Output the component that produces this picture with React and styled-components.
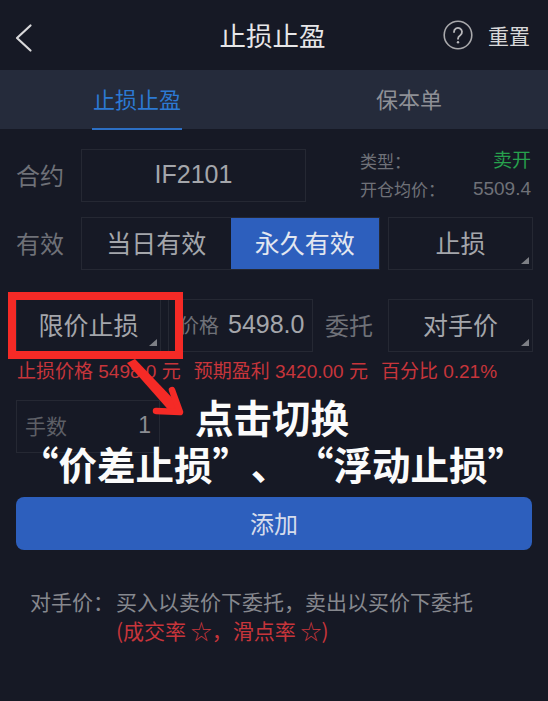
import React from "react";
import styled, { createGlobalStyle } from "styled-components";

const Global = createGlobalStyle`
  html, body { margin: 0; padding: 0; background: #161925; }
  * { box-sizing: border-box; }
  #root { width: 548px; height: 701px; overflow: hidden; }
`;

const Page = styled.div`
  position: relative;
  width: 548px;
  height: 701px;
  background: #161925;
  font-family: "Noto Sans CJK SC", "Liberation Sans", sans-serif;
  color: #9b9da3;
`;

const Header = styled.header`
  height: 70px;
  display: flex;
  align-items: center;
  padding: 4px 18px 0 14px;
`;

const BackIcon = styled.svg`
  flex: none;
  margin-top: 2px;
`;

const Title = styled.div`
  flex: 1;
  text-align: center;
  font-size: 26.5px;
  line-height: 34px;
  margin-top: -5px;
  color: #e6e6e8;
  padding-left: 68px;
`;

const HeaderRight = styled.div`
  display: flex;
  align-items: center;
  gap: 15px;
  margin-top: -5px;
  font-size: 21px;
  color: #d8d8da;
`;

const Tabs = styled.nav`
  height: 59px;
  display: flex;
  background: #252b3b;
`;

const Tab = styled.div`
  position: relative;
  width: ${(p) => p.$w}px;
  height: 100%;
  display: flex;
  align-items: center;
  justify-content: center;
  font-size: 22px;
  padding-bottom: 3px;
  color: ${(p) => (p.$active ? "#2c79d2" : "#8e9096")};
  &::after {
    content: "";
    display: ${(p) => (p.$active ? "block" : "none")};
    position: absolute;
    left: 92px;
    width: 90px;
    bottom: -1px;
    height: 2px;
    background: #2c6fc4;
  }
`;

const Form = styled.main`
  padding: 20px 16px 0;
  display: flex;
  flex-direction: column;
`;

const Row = styled.div`
  display: flex;
  align-items: center;
  height: 53px;
  margin-bottom: ${(p) => p.$mb || 0}px;
`;

const Label = styled.div`
  width: ${(p) => p.$w || 65}px;
  flex: none;
  font-size: 24px;
  color: #6f7178;
  padding-bottom: 3px;
  margin-left: ${(p) => p.$ml || 0}px;
`;

const Box = styled.div`
  position: relative;
  flex: none;
  width: ${(p) => p.$w}px;
  height: 100%;
  margin-left: ${(p) => p.$ml || 0}px;
  padding-bottom: 3px;
  border: 1px solid #252833;
  display: flex;
  align-items: center;
  justify-content: center;
  font-size: 25px;
  color: #a4a6ab;
`;

const Corner = styled.span`
  position: absolute;
  right: 3px;
  bottom: 5px;
  width: 0;
  height: 0;
  border-left: 8px solid transparent;
  border-bottom: 7px solid #7d7f85;
`;

const Contract = styled(Box)`
  font-family: "Liberation Sans", sans-serif;
  font-size: 25px;
`;

const Info = styled.div`
  flex: 1;
  margin: -3px 0 0 54px;
  display: grid;
  grid-template-columns: 1fr auto;
  row-gap: 3px;
  font-size: 17px;
  line-height: 25px;
  color: #6f7178;
  padding-right: 1px;
`;

const InfoValue = styled.div`
  text-align: right;
  color: ${(p) => p.$color || "#6f7178"};
  font-family: "Liberation Sans", "Noto Sans CJK SC", sans-serif;
  font-size: 19px;
`;

const Segment = styled.div`
  flex: none;
  width: 299px;
  height: 100%;
  display: flex;
  border: 1px solid #252833;
`;

const SegmentItem = styled.div`
  flex: 1;
  display: flex;
  align-items: center;
  justify-content: center;
  padding-bottom: 3px;
  font-size: 25px;
  background: ${(p) => (p.$active ? "#2d5fbd" : "transparent")};
  color: ${(p) => (p.$active ? "#e3e7f0" : "#a4a6ab")};
`;

const PriceBox = styled(Box)`
  justify-content: flex-start;
  padding-left: 10px;
  gap: 9px;
  font-size: 20px;
  color: #6f7178;
`;

const PriceValue = styled.span`
  font-family: "Liberation Sans", sans-serif;
  font-size: 25px;
  color: #a4a6ab;
`;

const Hint = styled.div`
  display: flex;
  height: 20px;
  margin: 10px 0 18px 1px;
  gap: 13px;
  font-family: "Liberation Sans", "Noto Sans CJK SC", sans-serif;
  font-size: 19px;
  line-height: 20px;
  color: #c7353b;
  white-space: nowrap;
`;

const LotBox = styled(Box)`
  justify-content: space-between;
  padding: 0 8px 3px 8px;
  font-size: 21px;
  color: #5d5f66;
`;

const LotValue = styled.span`
  font-family: "Liberation Sans", sans-serif;
  font-size: 23px;
  color: #8b8d93;
`;

const Submit = styled.div`
  margin-top: 44px;
  height: 53px;
  border-radius: 8px;
  background: #2d5fbd;
  padding-bottom: 2px;
  display: flex;
  align-items: center;
  justify-content: center;
  font-size: 24px;
  color: #d5dcec;
`;

const Note = styled.div`
  margin: 37px 0 0 14px;
  display: flex;
  gap: 2px;
  font-size: 21px;
  line-height: 29px;
  color: #86888e;
`;

const NoteBody = styled.div`
  display: flex;
  flex-direction: column;
`;

const NoteRed = styled.span`
  color: #c7353b;
`;

const Highlight = styled.div`
  position: absolute;
  left: 8px;
  top: 292px;
  width: 175px;
  height: 67px;
  border: 8px solid #f52a26;
`;

const Arrow = styled.svg`
  position: absolute;
  left: 120px;
  top: 355px;
`;

const Callout = styled.div`
  position: absolute;
  left: 0;
  top: 393px;
  width: 548px;
  color: #fbfbfb;
  font-weight: 700;
  font-size: 38.5px;
  line-height: 47px;
  white-space: nowrap;
`;

const CalloutLine = styled.div`
  padding-left: ${(p) => p.$left}px;
`;

const Pause = styled.span`
  margin: 0 25px 0 19px;
`;

const Back = () => (
  <BackIcon width="20" height="32" viewBox="0 0 20 32" fill="none">
    <path d="M16.5 3.5 L3 16 L16.5 28.5" stroke="#d8d8da" strokeWidth="2.2" strokeLinecap="round" strokeLinejoin="round" />
  </BackIcon>
);

const Help = () => (
  <svg width="30" height="30" viewBox="0 0 30 30" fill="none">
    <circle cx="15" cy="15" r="13.8" stroke="#a9a9ac" strokeWidth="1.6" />
    <path d="M11 12 a4 4 0 1 1 6.3 3.2 c-1.6 1-2.3 1.8-2.3 3.6" stroke="#b8b8bb" strokeWidth="1.8" strokeLinecap="round" />
    <circle cx="15" cy="22.3" r="1.2" fill="#b8b8bb" />
  </svg>
);

export default function App() {
  return (
    <Page>
      <Global />
      <Header>
        <Back />
        <Title>止损止盈</Title>
        <HeaderRight>
          <Help />
          <span>重置</span>
        </HeaderRight>
      </Header>
      <Tabs>
        <Tab $w={274} $active>止损止盈</Tab>
        <Tab $w={270}>保本单</Tab>
      </Tabs>
      <Form>
        <Row $mb={15}>
          <Label>合约</Label>
          <Contract $w={225}>IF2101</Contract>
          <Info>
            <div>类型：</div>
            <InfoValue $color="#27a14d">卖开</InfoValue>
            <div>开仓均价：</div>
            <InfoValue>5509.4</InfoValue>
          </Info>
        </Row>
        <Row $mb={29}>
          <Label>有效</Label>
          <Segment>
            <SegmentItem>当日有效</SegmentItem>
            <SegmentItem $active>永久有效</SegmentItem>
          </Segment>
          <Box $w={145} $ml={8}>止损<Corner /></Box>
        </Row>
        <Row>
          <Box $w={145}>限价止损<Corner /></Box>
          <PriceBox $w={145} $ml={7}>价格<PriceValue>5498.0</PriceValue></PriceBox>
          <Label $w={63} $ml={12}>委托</Label>
          <Box $w={145}>对手价<Corner /></Box>
        </Row>
        <Hint>
          <span>止损价格 5498.0 元</span>
          <span>预期盈利 3420.00 元</span>
          <span>百分比 0.21%</span>
        </Hint>
        <Row>
          <LotBox $w={144}>手数<LotValue>1</LotValue></LotBox>
        </Row>
        <Submit>添加</Submit>
        <Note>
          <span>对手价：</span>
          <NoteBody>
            <span>买入以卖价下委托，卖出以买价下委托</span>
            <NoteRed>(成交率 ☆，滑点率 ☆)</NoteRed>
          </NoteBody>
        </Note>
      </Form>
      <Highlight />
      <Arrow width="70" height="65" viewBox="120 355 70 65" fill="none">
        <path d="M127 363 L135 359 L180 406 L172 414 Z" fill="#f52a26" />
        <path d="M156 411 L180 412 L172 390" stroke="#f52a26" strokeWidth="6.5" strokeLinejoin="round" strokeLinecap="round" />
      </Arrow>
      <Callout>
        <CalloutLine $left={195}>点击切换</CalloutLine>
        <CalloutLine $left={20}>“价差止损”<Pause>、</Pause>“浮动止损”</CalloutLine>
      </Callout>
    </Page>
  );
}
